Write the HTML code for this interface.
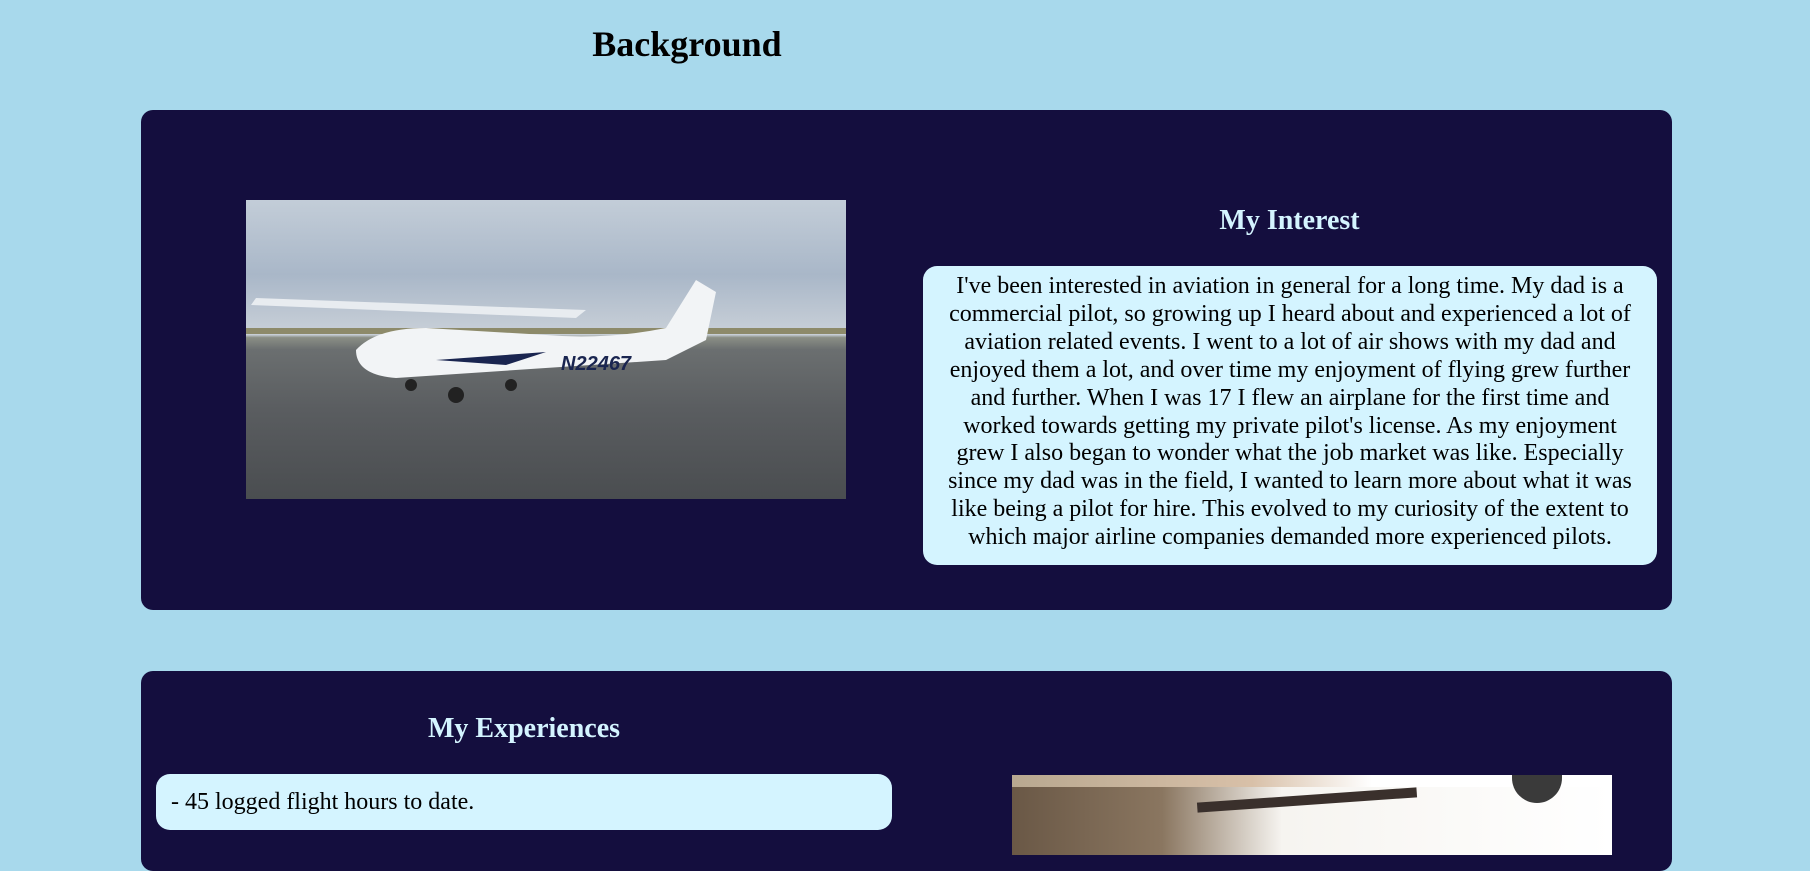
<!DOCTYPE html>
<html><head><meta charset="utf-8"><style>
html,body{margin:0;padding:0;}
body{width:1810px;height:840px;background:#a8d9ec;overflow:hidden;position:relative;font-family:"Liberation Serif",serif;}
h1{position:absolute;left:0;width:1374px;top:23px;margin:0;text-align:center;font-size:36px;font-weight:bold;color:#000;}
.card{position:absolute;left:141px;width:1531px;background:#140e3e;border-radius:12px;}
.h2{position:absolute;margin:0;font-size:28px;font-weight:bold;color:#d4f4ff;text-align:center;}
.box{position:absolute;background:#d4f4ff;border-radius:14px;color:#000;font-size:24px;line-height:27.9px;}
</style></head><body>
<h1>Background</h1>
<div class="card" style="top:110px;height:500px;">
  <div style="position:absolute;left:105px;top:90px;width:600px;height:299px;overflow:hidden;background:linear-gradient(180deg,#c3cdd8 0%,#a9b7c8 25%,#c9d0d8 45%,#8b8f86 46%,#6b6f70 50%,#5a5d60 70%,#4a4d50 100%);">
    <div style="position:absolute;left:0;top:128px;width:600px;height:6px;background:#8d8a6a"></div>
    <svg width="600" height="299" style="position:absolute;left:0;top:0">
      <path d="M5 105 L330 118 L340 110 L10 98 Z" fill="#e8ecf0"/>
      <path d="M110 150 Q130 128 180 128 L300 135 Q360 140 420 128 L450 80 L470 92 L460 140 L420 160 L150 178 Q110 175 110 150Z" fill="#f2f4f6"/>
      <text x="315" y="170" font-family="Liberation Sans" font-style="italic" font-weight="bold" font-size="20" fill="#1a2550">N22467</text>
      <path d="M190 160 L300 152 L260 165 Z" fill="#1a2550"/>
      <circle cx="210" cy="195" r="8" fill="#222"/><circle cx="165" cy="185" r="6" fill="#222"/><circle cx="265" cy="185" r="6" fill="#222"/>
    </svg>
  </div>
  <div class="h2" style="left:783px;width:731px;top:95px;">My Interest</div>
  <div class="box" style="left:782px;top:156px;width:734px;height:299px;text-align:center;">
    <div style="padding-top:7px;white-space:nowrap;">I've been interested in aviation in general for a long time. My dad is a<br>commercial pilot, so growing up I heard about and experienced a lot of<br>aviation related events. I went to a lot of air shows with my dad and<br>enjoyed them a lot, and over time my enjoyment of flying grew further<br>and further. When I was 17 I flew an airplane for the first time and<br>worked towards getting my private pilot's license. As my enjoyment<br>grew I also began to wonder what the job market was like. Especially<br>since my dad was in the field, I wanted to learn more about what it was<br>like being a pilot for hire. This evolved to my curiosity of the extent to<br>which major airline companies demanded more experienced pilots.</div>
  </div>
</div>
<div class="card" style="top:671px;height:200px;">
  <div class="h2" style="left:15px;width:736px;top:42px;">My Experiences</div>
  <div class="box" style="left:15px;top:103px;width:736px;height:56px;font-size:24px;line-height:22.9px;">
    <div style="padding:17px 0 0 15px;">- 45 logged flight hours to date.</div>
  </div>
  <div style="position:absolute;left:871px;top:104px;width:600px;height:80px;overflow:hidden;background:linear-gradient(90deg,#6a5846 0%,#8a7660 25%,#f6f4f0 45%,#ffffff 100%);">
    <div style="position:absolute;left:0;top:0;width:600px;height:12px;background:linear-gradient(90deg,#b8a890,#d8c0a8 40%,#fff 60%)"></div>
    <div style="position:absolute;left:185px;top:20px;width:220px;height:10px;background:#3a302c;transform:rotate(-4deg)"></div>
    <div style="position:absolute;left:500px;top:0;width:50px;height:28px;border-radius:0 0 25px 25px;background:#3a3a3a"></div>
  </div>
</div>
</body></html>
